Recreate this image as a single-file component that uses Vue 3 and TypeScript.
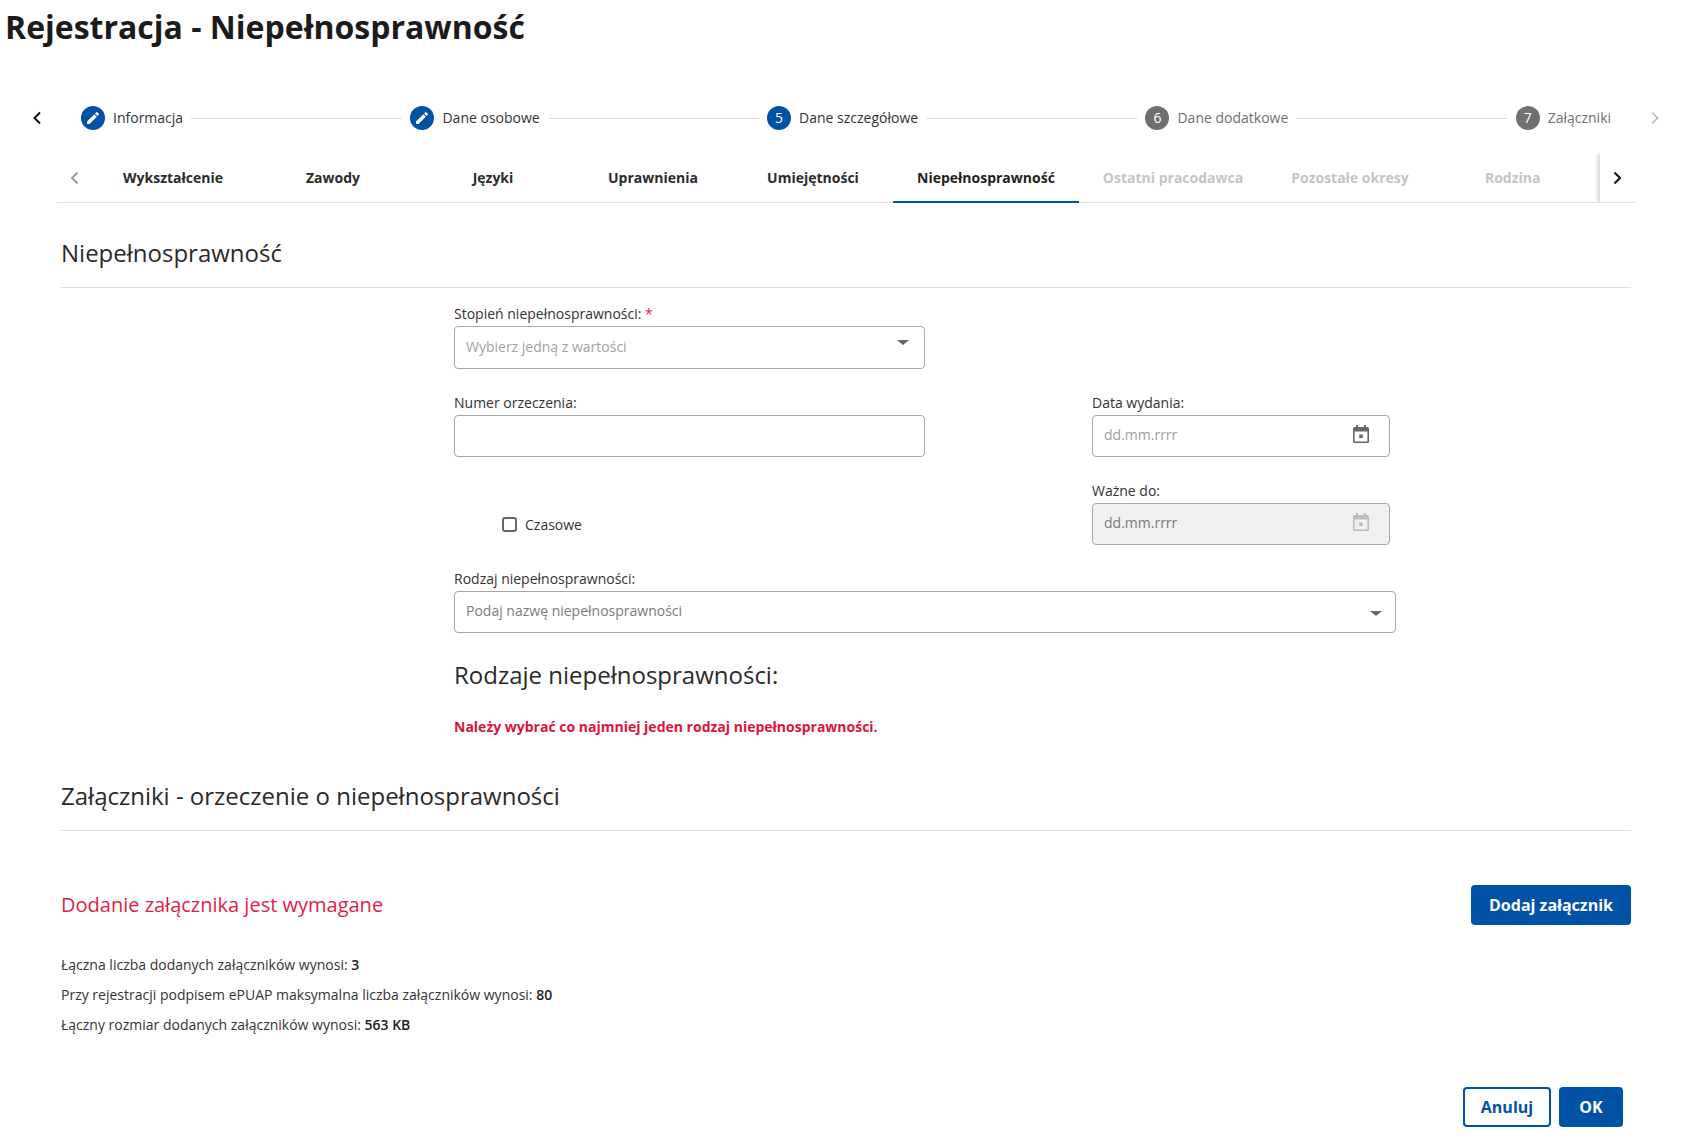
<script setup lang="ts">
interface Step { label: string; num?: number; state: 'done' | 'current' | 'todo' }
const steps: Step[] = [
  { label: 'Informacja', state: 'done' },
  { label: 'Dane osobowe', state: 'done' },
  { label: 'Dane szczegółowe', num: 5, state: 'current' },
  { label: 'Dane dodatkowe', num: 6, state: 'todo' },
  { label: 'Załączniki', num: 7, state: 'todo' },
]
const tabs = [
  { label: 'Wykształcenie' }, { label: 'Zawody' }, { label: 'Języki' }, { label: 'Uprawnienia' },
  { label: 'Umiejętności' }, { label: 'Niepełnosprawność', active: true },
  { label: 'Ostatni pracodawca', off: true }, { label: 'Pozostałe okresy', off: true }, { label: 'Rodzina', off: true },
]
</script>

<template>
  <div class="page">
    <h1 class="title">Rejestracja - Niepełnosprawność</h1>

    <div class="stepper">
      <div class="step-nav left">
        <svg width="14" height="14" viewBox="0 0 14 14"><path d="M10 1.500 4.500 7l5.500 5.500" fill="none" stroke="#111" stroke-width="2"/></svg>
      </div>
      <template v-for="(s, i) in steps" :key="s.label">
        <div class="step" :class="s.state">
          <span class="badge">
            <svg v-if="s.state === 'done'" width="16" height="16" viewBox="0 0 24 24"><path fill="#fff" d="M3 17.250V21h3.750L17.810 9.940l-3.750-3.750L3 17.250zM20.710 7.040a1 1 0 0 0 0-1.410l-2.340-2.340a1 1 0 0 0-1.410 0l-1.830 1.830 3.750 3.750 1.830-1.830z"/></svg>
            <template v-else>{{ s.num }}</template>
          </span>
          <span class="step-label">{{ s.label }}</span>
        </div>
        <span v-if="i < steps.length - 1" class="connector"></span>
      </template>
      <div class="step-nav right">
        <svg width="14" height="14" viewBox="0 0 14 14"><path d="M4 1.500 9.500 7 4 12.500" fill="none" stroke="#bbb" stroke-width="1.700"/></svg>
      </div>
    </div>

    <div class="tabs">
      <div class="tab-arrow prev">
        <svg width="12" height="12" viewBox="0 0 12 12"><path d="M8.500.5 3 6l5.500 5.500" fill="none" stroke="#9a9a9a" stroke-width="2"/></svg>
      </div>
      <div class="tab-list">
        <div v-for="t in tabs" :key="t.label" class="tab" :class="{ active: t.active, off: t.off }">{{ t.label }}</div>
      </div>
      <div class="tab-arrow next">
        <svg width="12" height="12" viewBox="0 0 12 12"><path d="M3.500.5 9 6l-5.500 5.500" fill="none" stroke="#111" stroke-width="2"/></svg>
      </div>
    </div>

    <div class="content">
      <h2 class="section first">Niepełnosprawność</h2>

      <div class="form">
        <div class="field">
          <label>Stopień niepełnosprawności: <span class="req">*</span></label>
          <div class="control select tall"><span class="ph">Wybierz jedną z wartości</span><i class="caret up"></i></div>
        </div>
        <div></div>
        <div></div>

        <div class="field">
          <label>Numer orzeczenia:</label>
          <div class="control"></div>
        </div>
        <div></div>
        <div class="field">
          <label>Data wydania:</label>
          <div class="control">
            <span class="ph">dd.mm.rrrr</span>
            <svg class="cal" width="18" height="18" viewBox="0 0 18 18"><path fill="#666" d="M4 0h2v2h6V0h2v2h1.500A1.500 1.500 0 0 1 17 3.500v13a1.500 1.500 0 0 1-1.500 1.500h-13A1.500 1.500 0 0 1 1 16.500v-13A1.500 1.500 0 0 1 2.500 2H4V0zM2.600 6.500v9.900h12.800V6.500H2.600zM7.200 9.500h3.600v3.400H7.200V9.500z"/></svg>
          </div>
        </div>

        <div class="check">
          <span class="box"></span>
          <span>Czasowe</span>
        </div>
        <div></div>
        <div class="field">
          <label>Ważne do:</label>
          <div class="control disabled">
            <span class="ph dark">dd.mm.rrrr</span>
            <svg class="cal" width="18" height="18" viewBox="0 0 18 18"><path fill="#bdbdbd" d="M4 0h2v2h6V0h2v2h1.500A1.500 1.500 0 0 1 17 3.500v13a1.500 1.500 0 0 1-1.500 1.500h-13A1.500 1.500 0 0 1 1 16.500v-13A1.500 1.500 0 0 1 2.500 2H4V0zM2.600 6.500v9.900h12.800V6.500H2.600zM7.200 9.500h3.600v3.400H7.200V9.500z"/></svg>
          </div>
        </div>

        <div class="field wide">
          <label>Rodzaj niepełnosprawności:</label>
          <div class="control select"><span class="ph dark">Podaj nazwę niepełnosprawności</span><i class="caret"></i></div>
        </div>

        <h3 class="kinds">Rodzaje niepełnosprawności:</h3>
        <p class="err">Należy wybrać co najmniej jeden rodzaj niepełnosprawności.</p>
      </div>

      <h2 class="section second">Załączniki - orzeczenie o niepełnosprawności</h2>

      <div class="attach-head">
        <span class="attach-req">Dodanie załącznika jest wymagane</span>
        <button class="btn primary add">Dodaj załącznik</button>
      </div>

      <div class="info">
        <p>Łączna liczba dodanych załączników wynosi: <b>3</b></p>
        <p>Przy rejestracji podpisem ePUAP maksymalna liczba załączników wynosi: <b>80</b></p>
        <p>Łączny rozmiar dodanych załączników wynosi: <b>563 KB</b></p>
      </div>

      <div class="actions">
        <button class="btn outline">Anuluj</button>
        <button class="btn primary ok">OK</button>
      </div>
    </div>
  </div>
</template>

<style>
html, body { margin: 0; background: #fff; }
</style>

<style scoped>
.page {
  width: 1687px;
  height: 1143px;
  overflow: hidden;
  font-family: "Open Sans", "Liberation Sans", sans-serif;
  font-size: 14px;
  color: #1f1f1f;
  background: #fff;
}
.title {
  margin: 0;
  padding: 5px 0 0 5px;
  font-size: 32px;
  line-height: 44px;
  font-weight: 700;
  color: #1b1b1b;
}
.stepper {
  display: flex;
  align-items: center;
  height: 40px;
  margin-top: 49px;
}
.step-nav { display: flex; align-items: center; flex: none; }
.step-nav.left { width: 81px; padding-left: 30px; box-sizing: border-box; }
.step-nav.right { width: 76px; padding-left: 37px; box-sizing: border-box; }
.step { display: flex; align-items: center; gap: 8px; flex: none; }
.badge {
  width: 24px;
  height: 24px;
  box-sizing: border-box;
  border-radius: 50%;
  display: flex;
  align-items: center;
  justify-content: center;
  color: #fff;
  font-size: 14px;
  background: #707070;
}
.step.current .badge, .step.todo .badge { padding-bottom: 2px; }
.step.done .badge, .step.current .badge { background: #0052a5; }
.step-label { color: #333; white-space: nowrap; position: relative; top: -1px; }
.step.todo .step-label { color: #707070; }
.connector { flex: 1; height: 1px; margin: 0 8px; background: #dcdcdc; }

.tabs {
  display: flex;
  margin: 12px 52px 0 57px;
  height: 53px;
  border-bottom: 1px solid #dedede;
  box-sizing: border-box;
}
.tab-arrow { display: flex; align-items: center; flex: none; }
.tab-arrow.prev { width: 36px; padding: 4px 0 0 12px; box-sizing: border-box; }
.tab-arrow.next {
  width: 36px;
  margin-top: 4px;
  padding-left: 11px;
  box-sizing: border-box;
  border-left: 1px solid #ddd;
  box-shadow: -2px 0 3px rgba(0, 0, 0, .12);
  background: #fff;
  position: relative;
  clip-path: inset(0 0 0 -6px);
}
.tab-list { display: flex; flex: 1; min-width: 0; }
.tab {
  min-width: 160px;
  flex: none;
  box-sizing: border-box;
  padding: 2px 24px 0;
  height: 53px;
  text-align: center;
  line-height: 52px;
  font-weight: 700;
  color: #2b2b2b;
  white-space: nowrap;
}
.tab.off { color: #c4c4c4; }
.tab.active { color: #1f1f1f; border-bottom: 2px solid #0052a5; }

.content { padding: 0 56px 0 61px; }
.section {
  margin: 0;
  font-size: 24px;
  line-height: 34px;
  font-weight: 400;
  color: #2a2a2a;
  padding-bottom: 17px;
  border-bottom: 1px solid #dedede;
}
.section.first { margin-top: 33px; }
.section.second { margin-top: 42px; }

.form {
  display: grid;
  grid-template-columns: 471px 167px 298px;
  row-gap: 23px;
  margin: 15px 0 0 393px;
}
.field { display: flex; flex-direction: column; gap: 2px; }
.field label { line-height: 20px; margin-top: 1px; color: #333; }
.field.wide { grid-column: 1 / -1; width: 942px; }
.req { color: #e21d47; }
.control {
  height: 42px;
  box-sizing: border-box;
  border: 1px solid #a8a8a8;
  border-radius: 4px;
  background: #fff;
  display: flex;
  align-items: center;
  padding: 0 11px;
  position: relative;
}
.control.tall { height: 43px; }
.control.disabled { background: #f0f0f0; }
.ph { color: #9e9e9e; position: relative; top: -2px; }
.ph.dark { color: #7b7b7b; }
.control.tall .ph { color: #a2a2a2; top: -1px; }
.cal { position: absolute; right: 19px; top: 9px; }
.caret {
  position: absolute;
  right: 13px;
  top: 19px;
  width: 0;
  height: 0;
  border-left: 6px solid transparent;
  border-right: 6px solid transparent;
  border-top: 5px solid #666;
}
.caret.up { top: 13px; right: 15px; }
.check {
  align-self: end;
  height: 42px;
  display: flex;
  align-items: center;
  gap: 8px;
  padding-left: 48px;
  color: #333;
}
.box {
  width: 15px;
  height: 15px;
  box-sizing: border-box;
  border: 2px solid #666;
  border-radius: 3px;
}
.kinds {
  grid-column: 1 / -1;
  margin: 2px 0 0;
  font-size: 24px;
  line-height: 34px;
  font-weight: 400;
  color: #2a2a2a;
}
.err {
  grid-column: 1 / -1;
  margin: 2px 0 0;
  font-weight: 700;
  line-height: 20px;
  color: #dc143c;
}
.attach-head {
  display: flex;
  justify-content: space-between;
  align-items: center;
  margin-top: 54px;
}
.attach-req { font-size: 20px; color: #e21d47; position: relative; top: -1px; }
.btn {
  font-family: inherit;
  font-weight: 700;
  font-size: 16px;
  height: 40px;
  border-radius: 4px;
  cursor: pointer;
  padding: 0;
  box-sizing: border-box;
}
.btn.primary { background: #0052a5; color: #fff; border: 0; }
.btn.outline { background: #fff; color: #0052a5; border: 2px solid #0052a5; width: 88px; }
.btn.add { width: 160px; }
.btn.ok { width: 64px; }
.info { margin-top: 25px; }
.info p { margin: 0; line-height: 30px; color: #333; }
.info b { font-weight: 600; color: #222; }
.actions {
  display: flex;
  justify-content: flex-end;
  gap: 8px;
  margin-top: 47px;
  padding-right: 8px;
}
</style>
